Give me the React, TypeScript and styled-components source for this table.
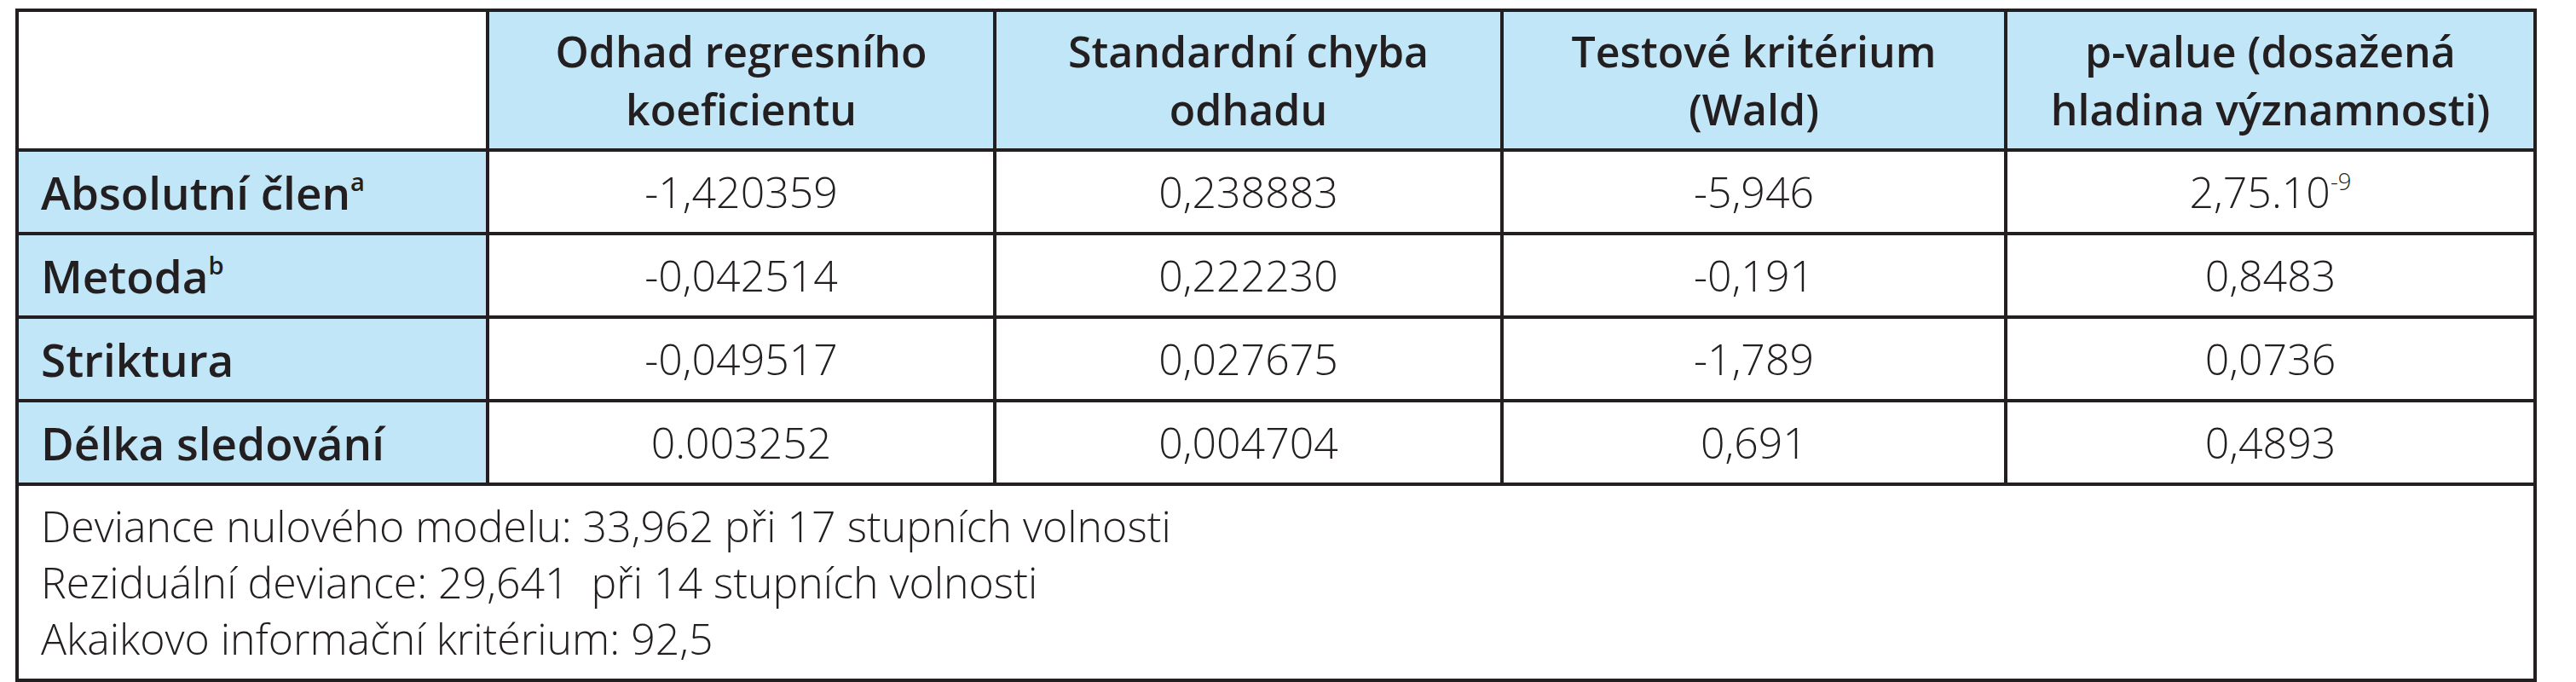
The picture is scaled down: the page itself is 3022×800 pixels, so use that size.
import styled, { createGlobalStyle } from 'styled-components';

const GlobalStyle = createGlobalStyle`
  body {
    margin: 0;
    background: #ffffff;
  }
`;

const ink = '#231f20';
const sky = '#c1e6f7';

const Page = styled.div`
  padding: 10px 46px 0 18px;
`;

const Table = styled.table`
  width: 100%;
  table-layout: fixed;
  border-collapse: collapse;
  border: 4px solid ${ink};
  font-family: "Open Sans", "Liberation Sans", sans-serif;
  color: ${ink};
`;

const Col = styled.col<{ $w: number }>`
  width: ${(p) => p.$w}px;
`;

const HeadRow = styled.tr`
  height: 164px;
`;

const BodyRow = styled.tr`
  height: 98px;
`;

const NoteRow = styled.tr`
  height: 230px;
`;

const HeadCell = styled.th<{ $blank?: boolean }>`
  border: 4px solid ${ink};
  background: ${(p) => (p.$blank ? '#ffffff' : sky)};
  font-size: 50px;
  font-weight: 600;
  line-height: 68px;
  text-align: center;
  padding: 0 12px;
`;

const LabelCell = styled.th`
  border: 4px solid ${ink};
  background: ${sky};
  font-size: 53px;
  font-weight: 600;
  text-align: left;
  padding: 0 0 0 26px;
  white-space: nowrap;
`;

const ValueCell = styled.td`
  border: 4px solid ${ink};
  font-size: 50px;
  font-weight: 300;
  text-align: center;
  padding: 0;
`;

const NoteCell = styled.td`
  border: 4px solid ${ink};
  vertical-align: top;
  padding: 14px 26px 0;
  font-size: 50px;
  font-weight: 300;
  line-height: 66px;
  text-align: left;
`;

const NoteLine = styled.div`
  white-space: pre;
`;

const Sup = styled.sup`
  font-size: 0.55em;
  line-height: 0;
  vertical-align: 0.75em;
`;

const headers = [
  ['Odhad regresního', 'koeficientu'],
  ['Standardní chyba', 'odhadu'],
  ['Testové kritérium', '(Wald)'],
  ['p-value (dosažená', 'hladina významnosti)'],
];

const rows: { label: string; mark?: string; values: React.ReactNode[] }[] = [
  {
    label: 'Absolutní člen',
    mark: 'a',
    values: [
      '-1,420359',
      '0,238883',
      '-5,946',
      <>
        2,75.10<Sup>-9</Sup>
      </>,
    ],
  },
  { label: 'Metoda', mark: 'b', values: ['-0,042514', '0,222230', '-0,191', '0,8483'] },
  { label: 'Striktura', values: ['-0,049517', '0,027675', '-1,789', '0,0736'] },
  { label: 'Délka sledování', values: ['0.003252', '0,004704', '0,691', '0,4893'] },
];

const notes = [
  'Deviance nulového modelu: 33,962 při 17 stupních volnosti',
  'Reziduální deviance: 29,641  při 14 stupních volnosti',
  'Akaikovo informační kritérium: 92,5',
];

export default function App() {
  return (
    <>
      <GlobalStyle />
      <Page>
        <Table>
          <colgroup>
            <Col $w={552} />
            <Col $w={595} />
            <Col $w={595} />
            <Col $w={591} />
            <Col $w={621} />
          </colgroup>
          <thead>
            <HeadRow>
              <HeadCell $blank />
              {headers.map(([a, b]) => (
                <HeadCell key={a}>
                  {a}
                  <br />
                  {b}
                </HeadCell>
              ))}
            </HeadRow>
          </thead>
          <tbody>
            {rows.map((r) => (
              <BodyRow key={r.label}>
                <LabelCell scope="row">
                  {r.label}
                  {r.mark && <Sup>{r.mark}</Sup>}
                </LabelCell>
                {r.values.map((v, i) => (
                  <ValueCell key={i}>{v}</ValueCell>
                ))}
              </BodyRow>
            ))}
            <NoteRow>
              <NoteCell colSpan={5}>
                {notes.map((n) => (
                  <NoteLine key={n}>{n}</NoteLine>
                ))}
              </NoteCell>
            </NoteRow>
          </tbody>
        </Table>
      </Page>
    </>
  );
}
